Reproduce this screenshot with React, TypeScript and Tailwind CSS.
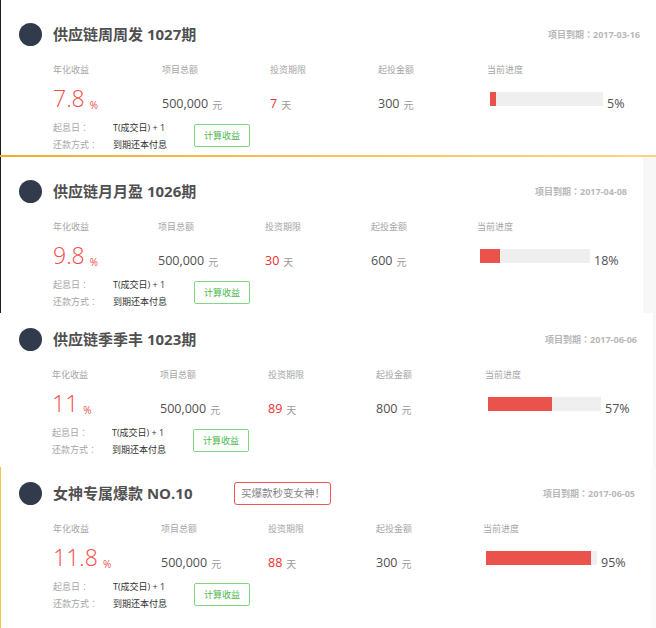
import React from "react";

type Card = {
  title: string;
  badge?: string;
  date: string;
  rate: string;
  total: string;
  days: string;
  min: string;
  pct: number;
  wrap: string;
  pt: string;
  bodyPl: string;
  cols: string[];
  barW: string;
  strip?: string;
  line?: boolean;
};

const cards: Card[] = [
  {
    title: "供应链周周发 1027期",
    date: "2017-03-16",
    rate: "7.8",
    total: "500,000",
    days: "7",
    min: "300",
    pct: 5,
    wrap: "border-l border-l-[#1c1c1c] h-[155px]",
    pt: "pt-[22px]",
    bodyPl: "pl-[52px]",
    cols: ["w-[109px]", "w-[108px]", "w-[108px]", "w-[109px]"],
    barW: "w-[113px]",
    line: true,
  },
  {
    title: "供应链月月盈 1026期",
    date: "2017-04-08",
    rate: "9.8",
    total: "500,000",
    days: "30",
    min: "600",
    pct: 18,
    wrap: "border-l border-l-[#1c1c1c] h-[156px]",
    pt: "pt-[22px]",
    bodyPl: "pl-[52px]",
    cols: ["w-[105px]", "w-[107px]", "w-[106px]", "w-[106px]"],
    barW: "w-[110px]",
    strip: "w-[13px] bg-[#f7f7f7]",
  },
  {
    title: "供应链季季丰 1023期",
    date: "2017-06-06",
    rate: "11",
    total: "500,000",
    days: "89",
    min: "800",
    pct: 57,
    wrap: "border-l border-l-transparent h-[154px]",
    pt: "pt-[14px]",
    bodyPl: "pl-[51px]",
    cols: ["w-[108px]", "w-[108px]", "w-[108px]", "w-[109px]"],
    barW: "w-[113px]",
    strip: "w-[3px] bg-[#f7f7f7]",
  },
  {
    title: "女神专属爆款 NO.10",
    badge: "买爆款秒变女神！",
    date: "2017-06-05",
    rate: "11.8",
    total: "500,000",
    days: "88",
    min: "300",
    pct: 95,
    wrap: "border-l border-l-[#f4c44a] h-[161px]",
    pt: "pt-[14px]",
    bodyPl: "pl-[52px]",
    cols: ["w-[108px]", "w-[107px]", "w-[108px]", "w-[107px]"],
    barW: "w-[111px]",
    strip: "w-[5px] bg-[#fafafa]",
  },
];

const font = "font-['Open_Sans','Noto_Sans_CJK_SC',sans-serif]";

function Colon() {
  return <span className="font-['Noto_Sans_CJK_TC','Noto_Sans_CJK_SC',sans-serif]">：</span>;
}

function ProductCard({ c }: { c: Card }) {
  return (
    <>
      <div className={`flex bg-white ${c.wrap}`}>
        <div className="flex-1 min-w-0">
          <div className={`flex items-center h-[24px] pl-[18px] pr-[16px] box-content ${c.pt}`}>
            <div className="w-[23px] h-[23px] rounded-full bg-[#323b4c] shrink-0" />
            <div className="ml-[11px] text-[15px] font-bold leading-none text-[#505050] whitespace-nowrap">
              {c.title}
            </div>
            {c.badge && (
              <div className="ml-[42px] h-[23px] w-[97px] flex items-center justify-center border-[1.5px] border-[#ee5555] rounded-[3px] text-[10.5px] leading-none text-[#858585]">
                {c.badge}
              </div>
            )}
            <div className="ml-auto text-[9px] font-bold leading-none text-[#b8b8b8] whitespace-nowrap">
              项目到期<Colon />{c.date}
            </div>
          </div>
          <div className={c.bodyPl}>
            <div className="flex mt-[18px] text-[9px] leading-[12px] text-[#a6a6a6]">
              <div className={c.cols[0]}>年化收益</div>
              <div className={c.cols[1]}>项目总额</div>
              <div className={c.cols[2]}>投资期限</div>
              <div className={c.cols[3]}>起投金额</div>
              <div>当前进度</div>
            </div>
            <div className="flex items-end h-[24px] mt-[10px] leading-none">
              <div className={`flex items-end ${c.cols[0]}`}>
                <span className="text-[23px] font-light text-[#f44c4c]">{c.rate}</span>
                <span className="ml-[5px] text-[10px] text-[#f44c4c]">%</span>
              </div>
              <div className={`flex items-end ${c.cols[1]}`}>
                <span className="text-[12.5px] text-[#505050]">{c.total}</span>
                <span className="ml-[4px] text-[10px] text-[#9a9a9a]">元</span>
              </div>
              <div className={`flex items-end ${c.cols[2]}`}>
                <span className="text-[12.5px] text-[#ee2f2f]">{c.days}</span>
                <span className="ml-[4px] text-[10px] text-[#9a9a9a]">天</span>
              </div>
              <div className={`flex items-end ${c.cols[3]}`}>
                <span className="text-[12.5px] text-[#505050]">{c.min}</span>
                <span className="ml-[4px] text-[10px] text-[#9a9a9a]">元</span>
              </div>
              <div className="flex items-end">
                <div className={`ml-[3px] mb-[4px] h-[14px] bg-[#efefef] ${c.barW}`}>
                  <div className="h-full bg-[#e9534b]" style={{ width: `${c.pct}%` }} />
                </div>
                <span className="ml-[4px] text-[12.5px] text-[#505050]">{c.pct}%</span>
              </div>
            </div>
            <div className="flex items-start mt-[9px]">
              <div className="grid grid-cols-[60px_81px] text-[9px] leading-[17px]">
                <div className="text-[#a6a6a6]">起息日<Colon /></div>
                <div className="text-[#333]">T(成交日) + 1</div>
                <div className="text-[#a6a6a6]">还款方式<Colon /></div>
                <div className="text-[#333]">到期还本付息</div>
              </div>
              <button className="mt-[5px] h-[23px] w-[56px] flex items-center justify-center border border-[#7fd87f] rounded-[2px] bg-white text-[9px] leading-none text-[#4cb84c]">
                计算收益
              </button>
            </div>
          </div>
        </div>
        {c.strip && <div className={c.strip} />}
      </div>
      {c.line && <div className="h-[2px] bg-gradient-to-r from-[#f0ad28] to-[#f9d77c]" />}
    </>
  );
}

export default function App() {
  return (
    <div className={`w-[656px] h-[628px] overflow-hidden bg-white ${font}`}>
      {cards.map((c, i) => (
        <ProductCard key={i} c={c} />
      ))}
    </div>
  );
}
